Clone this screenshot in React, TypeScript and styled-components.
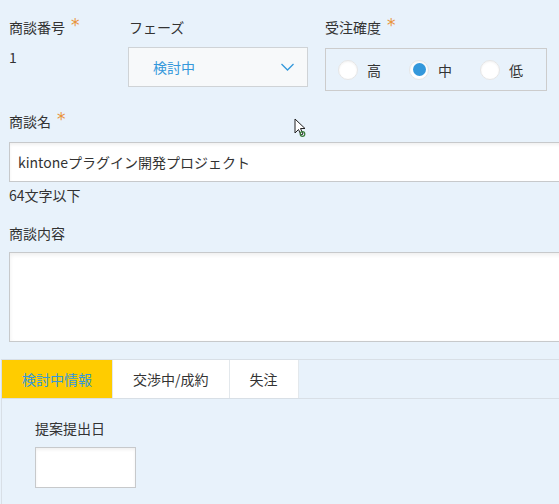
import styled, { createGlobalStyle } from "styled-components";

const GlobalStyle = createGlobalStyle`
  html, body {
    margin: 0;
    padding: 0;
    background: #e8f2fb;
    overflow: hidden;
  }
  body {
    font-family: "Noto Sans CJK JP", "Noto Sans", sans-serif;
    font-size: 14px;
    color: #333333;
  }
`;

const Page = styled.div`
  position: relative;
  width: 559px;
  height: 504px;
  overflow: hidden;
`;

const Form = styled.div`
  padding: 17px 0 0 9px;
  display: flex;
  flex-direction: column;
`;

const TopRow = styled.div`
  display: flex;
`;

const Field = styled.div<{ $width?: number }>`
  display: flex;
  flex-direction: column;
  width: ${(p) => (p.$width ? `${p.$width}px` : "auto")};
  flex-shrink: 0;
`;

const Label = styled.div<{ $gap?: number }>`
  line-height: 20px;
  height: 20px;
  margin-bottom: ${(p) => p.$gap ?? 10}px;
  white-space: nowrap;
`;

const Required = styled.span`
  display: inline-block;
  color: #e8923a;
  margin-left: 6px;
  font-family: "DejaVu Sans", sans-serif;
  font-size: 17px;
  line-height: 20px;
  vertical-align: top;
  position: relative;
  top: -2px;
`;

const Value = styled.div`
  line-height: 20px;
`;

const Select = styled.div`
  box-sizing: border-box;
  width: 180px;
  height: 40px;
  margin-left: -1px;
  border: 1px solid #cfd3d6;
  background: #f7f9fa;
  display: flex;
  align-items: center;
  justify-content: space-between;
  padding: 0 13px 0 24px;
  color: #3498db;
`;

const RadioGroup = styled.div`
  box-sizing: border-box;
  height: 43px;
  margin-top: 1px;
  border: 1px solid #cccccc;
  display: flex;
  align-items: center;
  padding: 0 12px;
  gap: 28px;
  width: 222px;
`;

const RadioItem = styled.label`
  display: flex;
  align-items: center;
  gap: 9px;
  line-height: 20px;
`;

const RadioCircle = styled.span<{ $checked?: boolean }>`
  box-sizing: border-box;
  width: 20px;
  height: 20px;
  border-radius: 50%;
  background: #ffffff;
  border: 1px solid #e6e6e6;
  box-shadow: inset 0 1px 2px rgba(0, 0, 0, 0.05);
  display: flex;
  align-items: center;
  justify-content: center;
  &::after {
    content: "";
    display: ${(p) => (p.$checked ? "block" : "none")};
    width: 13px;
    height: 13px;
    border-radius: 50%;
    background: #3498db;
  }
`;

const Block = styled.div<{ $top: number }>`
  margin-top: ${(p) => p.$top}px;
  display: flex;
  flex-direction: column;
`;

const TextInput = styled.div`
  box-sizing: border-box;
  width: 600px;
  height: 40px;
  border: 1px solid #c7c9cb;
  background: #ffffff;
  box-shadow: inset 0 2px 3px rgba(0, 0, 0, 0.06);
  padding: 0 8px;
  line-height: 38px;
  white-space: nowrap;
`;

const Hint = styled.div`
  line-height: 20px;
  margin-top: 3px;
`;

const TextArea = styled.div`
  box-sizing: border-box;
  width: 600px;
  height: 90px;
  border: 1px solid #c7c9cb;
  background: #ffffff;
  box-shadow: inset 0 2px 4px rgba(0, 0, 0, 0.07);
`;

const TabArea = styled.div`
  margin-top: 17px;
  margin-left: 1px;
  border-top: 1px solid #d8dfe6;
  border-left: 1px solid #d8dfe6;
`;

const TabList = styled.div`
  display: flex;
  border-bottom: 1px solid #d8dfe6;
  height: 38px;
`;

const Tab = styled.div<{ $active?: boolean }>`
  padding: 0 20px;
  line-height: 38px;
  white-space: nowrap;
  background: ${(p) => (p.$active ? "#ffcc00" : "#ffffff")};
  color: ${(p) => (p.$active ? "#3498db" : "#333333")};
  border-right: 1px solid #e3e8ec;
`;

const TabPanel = styled.div`
  padding: 19px 0 30px 33px;
  display: flex;
  flex-direction: column;
`;

const DateInput = styled.div`
  box-sizing: border-box;
  width: 101px;
  height: 41px;
  border: 1px solid #c7c9cb;
  background: #ffffff;
  box-shadow: inset 0 2px 3px rgba(0, 0, 0, 0.06);
`;

const Cursor = styled.svg`
  position: absolute;
  left: 294px;
  top: 118px;
`;

function Chevron() {
  return (
    <svg width="13" height="8" viewBox="0 0 13 8">
      <path d="M0.5 1 L6.5 7 L12.5 1" fill="none" stroke="#3498db" strokeWidth="1.3" />
    </svg>
  );
}

const radios = [
  { label: "高", checked: false },
  { label: "中", checked: true },
  { label: "低", checked: false },
];

const tabs = ["検討中情報", "交渉中/成約", "失注"];

export default function App() {
  return (
    <Page>
      <GlobalStyle />
      <Form>
        <TopRow>
          <Field $width={120}>
            <Label>
              商談番号<Required>*</Required>
            </Label>
            <Value>1</Value>
          </Field>
          <Field $width={196}>
            <Label>フェーズ</Label>
            <Select>
              <span>検討中</span>
              <Chevron />
            </Select>
          </Field>
          <Field>
            <Label>
              受注確度<Required>*</Required>
            </Label>
            <RadioGroup>
              {radios.map((r) => (
                <RadioItem key={r.label}>
                  <RadioCircle $checked={r.checked} />
                  {r.label}
                </RadioItem>
              ))}
            </RadioGroup>
          </Field>
        </TopRow>
        <Block $top={20}>
          <Label $gap={11}>
            商談名<Required>*</Required>
          </Label>
          <TextInput>kintoneプラグイン開発プロジェクト</TextInput>
          <Hint>64文字以下</Hint>
        </Block>
        <Block $top={18}>
          <Label $gap={9}>商談内容</Label>
          <TextArea />
        </Block>
      </Form>
      <TabArea>
        <TabList>
          {tabs.map((t, i) => (
            <Tab key={t} $active={i === 0}>
              {t}
            </Tab>
          ))}
        </TabList>
        <TabPanel>
          <Label $gap={9}>提案提出日</Label>
          <DateInput />
        </TabPanel>
      </TabArea>
      <Cursor width="12" height="20" viewBox="0 0 12 20">
        <path d="M1 1 L1 15 L4.5 11.5 L7 17 L9 16 L6.5 10.5 L11 10.5 Z" fill="#ffffff" stroke="#222" strokeWidth="1" />
        <circle cx="8.5" cy="16" r="2.3" fill="none" stroke="#3a7d3a" strokeWidth="1.2" />
      </Cursor>
    </Page>
  );
}
